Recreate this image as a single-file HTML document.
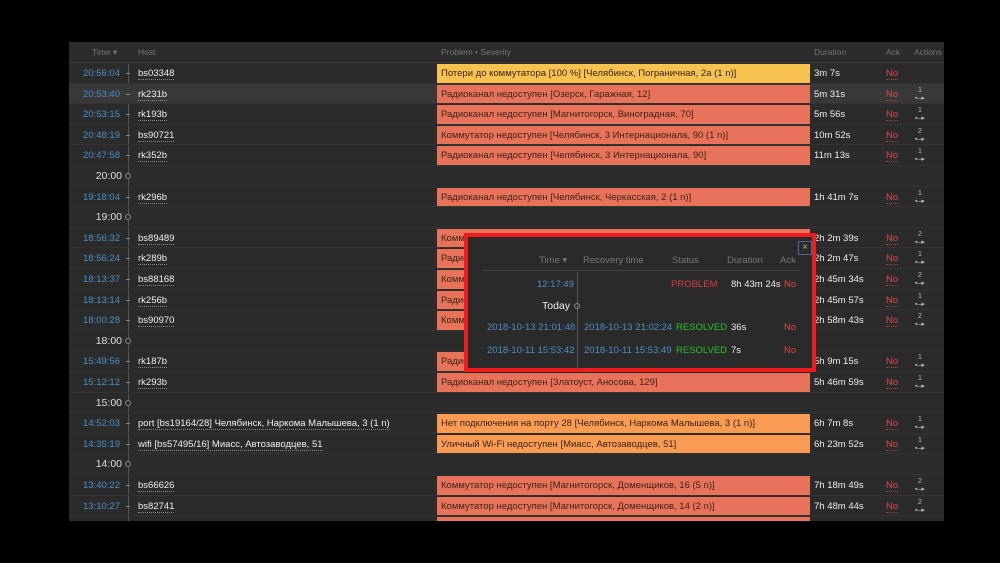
<!DOCTYPE html><html><head><meta charset="utf-8"><style>
*{margin:0;padding:0;box-sizing:border-box}
body{width:1000px;height:563px;background:#000;font-family:"Liberation Sans",sans-serif;font-size:9.5px;position:relative;overflow:hidden}
#p{position:absolute;left:69px;top:42px;width:875px;height:479px;background:#2b2b2b;overflow:hidden}
.h{position:absolute;top:0;height:20px;line-height:20px;color:#777;font-size:8.5px}
.hl{position:absolute;left:0;top:20px;width:875px;height:1px;background:#3c3c3c}
.r{position:absolute;left:0;width:875px;height:20.6px;line-height:21px;border-bottom:1px solid #333}
.r span{position:absolute;white-space:nowrap}
.t{right:824px;color:#4a90c8;text-align:right}
.sep{right:822px;color:#ddd;font-size:10.5px}
.ho{left:69px;color:#eee;border-bottom:1px dotted #888;line-height:11px;top:5px}
.pr{left:368px;width:373px;top:1px;height:18.6px;line-height:19.5px;color:#3a2418;padding-left:4px;overflow:hidden}
.red{background:#e8735a}.yel{background:#f7c24f}.or{background:#f99b52}
.du{left:745px;color:#eee}
.ack{left:817px;color:#e04848;border-bottom:1px dotted #a44;line-height:11px;top:5px}
.ac{left:846px;color:#bbb;font-size:7px;line-height:8px;top:3px;text-align:center}
#tl{position:absolute;left:59px;top:22px;width:1px;height:460px;background:#555}
.dot{position:absolute;left:57px;width:4px;height:1px;background:#888}
.ring{position:absolute;left:56px;width:6px;height:6px;border:1px solid #888;border-radius:50%;background:#2b2b2b}
#box{position:absolute;left:464px;top:233px;width:352px;height:139px;border:4px solid #ee1c1c;background:#2a2a2a}
#box .x{position:absolute;left:330px;top:4px;width:14px;height:14px;border:1px solid #4a6a8a;color:#aaa;font-size:10px;line-height:12px;text-align:center}
#box span{position:absolute;white-space:nowrap}
</style></head><body>
<div id="p">
<div class="h" style="left:23px">Time ▾</div>
<div class="h" style="left:69px">Host</div>
<div class="h" style="left:372px">Problem • Severity</div>
<div class="h" style="left:745px">Duration</div>
<div class="h" style="left:817px">Ack</div>
<div class="h" style="left:845px">Actions</div>
<div class="hl"></div>
<div id="tl"></div>
</div>
<div id="box">
<div class="x">×</div>
<span style="left:71px;top:18px;color:#777">Time ▾</span>
<span style="left:115px;top:18px;color:#777">Recovery time</span>
<span style="left:204px;top:18px;color:#777">Status</span>
<span style="left:259px;top:18px;color:#777">Duration</span>
<span style="left:312px;top:18px;color:#777">Ack</span>
<div style="position:absolute;left:14px;top:33px;width:318px;height:1px;background:#444"></div>
<div style="position:absolute;left:109px;top:35px;width:1px;height:98px;background:#555"></div>
<span style="left:69px;top:42px;color:#4a90c8">12:17:49</span>
<span style="left:203px;top:42px;color:#d84040">PROBLEM</span>
<span style="left:263px;top:42px;color:#eee">8h 43m 24s</span>
<span style="left:316px;top:42px;color:#e04848">No</span>
<span style="left:74px;top:63px;color:#eee;font-size:10.5px">Today</span>
<span style="left:106px;top:66px;width:6px;height:6px;border:1px solid #888;border-radius:50%"></span>
<span style="left:19px;top:85px;color:#4a90c8">2018-10-13 21:01:48</span>
<span style="left:116px;top:85px;color:#4a90c8">2018-10-13 21:02:24</span>
<span style="left:208px;top:85px;color:#2bc02b">RESOLVED</span>
<span style="left:263px;top:85px;color:#eee">36s</span>
<span style="left:316px;top:85px;color:#e04848">No</span>
<span style="left:19px;top:108px;color:#4a90c8">2018-10-11 15:53:42</span>
<span style="left:116px;top:108px;color:#4a90c8">2018-10-11 15:53:49</span>
<span style="left:208px;top:108px;color:#2bc02b">RESOLVED</span>
<span style="left:263px;top:108px;color:#eee">7s</span>
<span style="left:316px;top:108px;color:#e04848">No</span>
</div>
<script>
var rows=[
["20:56:04","bs03348","yel","Потери до коммутатора [100 %] [Челябинск, Пограничная, 2а (1 n)]","3m 7s",""],
["20:53:40","rk231b","red","Радиоканал недоступен [Озерск, Гаражная, 12]","5m 31s","1"],
["20:53:15","rk193b","red","Радиоканал недоступен [Магнитогорск, Виноградная, 70]","5m 56s","1"],
["20:48:19","bs90721","red","Коммутатор недоступен [Челябинск, 3 Интернационала, 90 (1 n)]","10m 52s","2"],
["20:47:58","rk352b","red","Радиоканал недоступен [Челябинск, 3 Интернационала, 90]","11m 13s","1"],
["20:00"],
["19:18:04","rk296b","red","Радиоканал недоступен [Челябинск, Черкасская, 2 (1 n)]","1h 41m 7s","1"],
["19:00"],
["18:56:32","bs89489","red","Коммутатор недоступен","2h 2m 39s","2"],
["18:56:24","rk289b","red","Радиоканал недоступен","2h 2m 47s","1"],
["18:13:37","bs88168","red","Коммутатор недоступен","2h 45m 34s","2"],
["18:13:14","rk256b","red","Радиоканал недоступен","2h 45m 57s","1"],
["18:00:28","bs90970","red","Коммутатор недоступен","2h 58m 43s","2"],
["18:00"],
["15:49:56","rk187b","red","Радиоканал недоступен","5h 9m 15s","1"],
["15:12:12","rk293b","red","Радиоканал недоступен [Златоуст, Аносова, 129]","5h 46m 59s","1"],
["15:00"],
["14:52:03","port [bs19164/28] Челябинск, Наркома Малышева, 3 (1 n)","or","Нет подключения на порту 28 [Челябинск, Наркома Малышева, 3 (1 n)]","6h 7m 8s","1"],
["14:35:19","wifi [bs57495/16] Миасс, Автозаводцев, 51","or","Уличный Wi-Fi недоступен [Миасс, Автозаводцев, 51]","6h 23m 52s","1"],
["14:00"],
["13:40:22","bs66626","red","Коммутатор недоступен [Магнитогорск, Доменщиков, 16 (5 n)]","7h 18m 49s","2"],
["13:10:27","bs82741","red","Коммутатор недоступен [Магнитогорск, Доменщиков, 14 (2 n)]","7h 48m 44s","2"],
["","","red","","",""]];
var p=document.getElementById('p'),h='';
rows.forEach(function(r,i){var top=21+i*20.6;
if(r.length==1){h+='<div class="r" style="top:'+top+'px"><span class="sep">'+r[0]+'</span></div><div class="ring" style="top:'+(top+7)+'px"></div>';return;}
h+='<div class="r" style="top:'+top+'px;'+(i==1?'background:#383838':'')+'"><span class="t">'+r[0]+'</span>'+(r[1]?'<span class="ho">'+r[1]+'</span>':'')+'<span class="pr '+r[2]+'">'+r[3]+'</span><span class="du">'+r[4]+'</span>'+(r[0]?'<span class="ack">No</span>':'')+(r[5]?'<span class="ac">'+r[5]+'<br>▪–▸</span>':'')+'</div><div class="dot" style="top:'+(top+10)+'px"></div>';});
p.insertAdjacentHTML('beforeend',h);
</script>
</body></html>
